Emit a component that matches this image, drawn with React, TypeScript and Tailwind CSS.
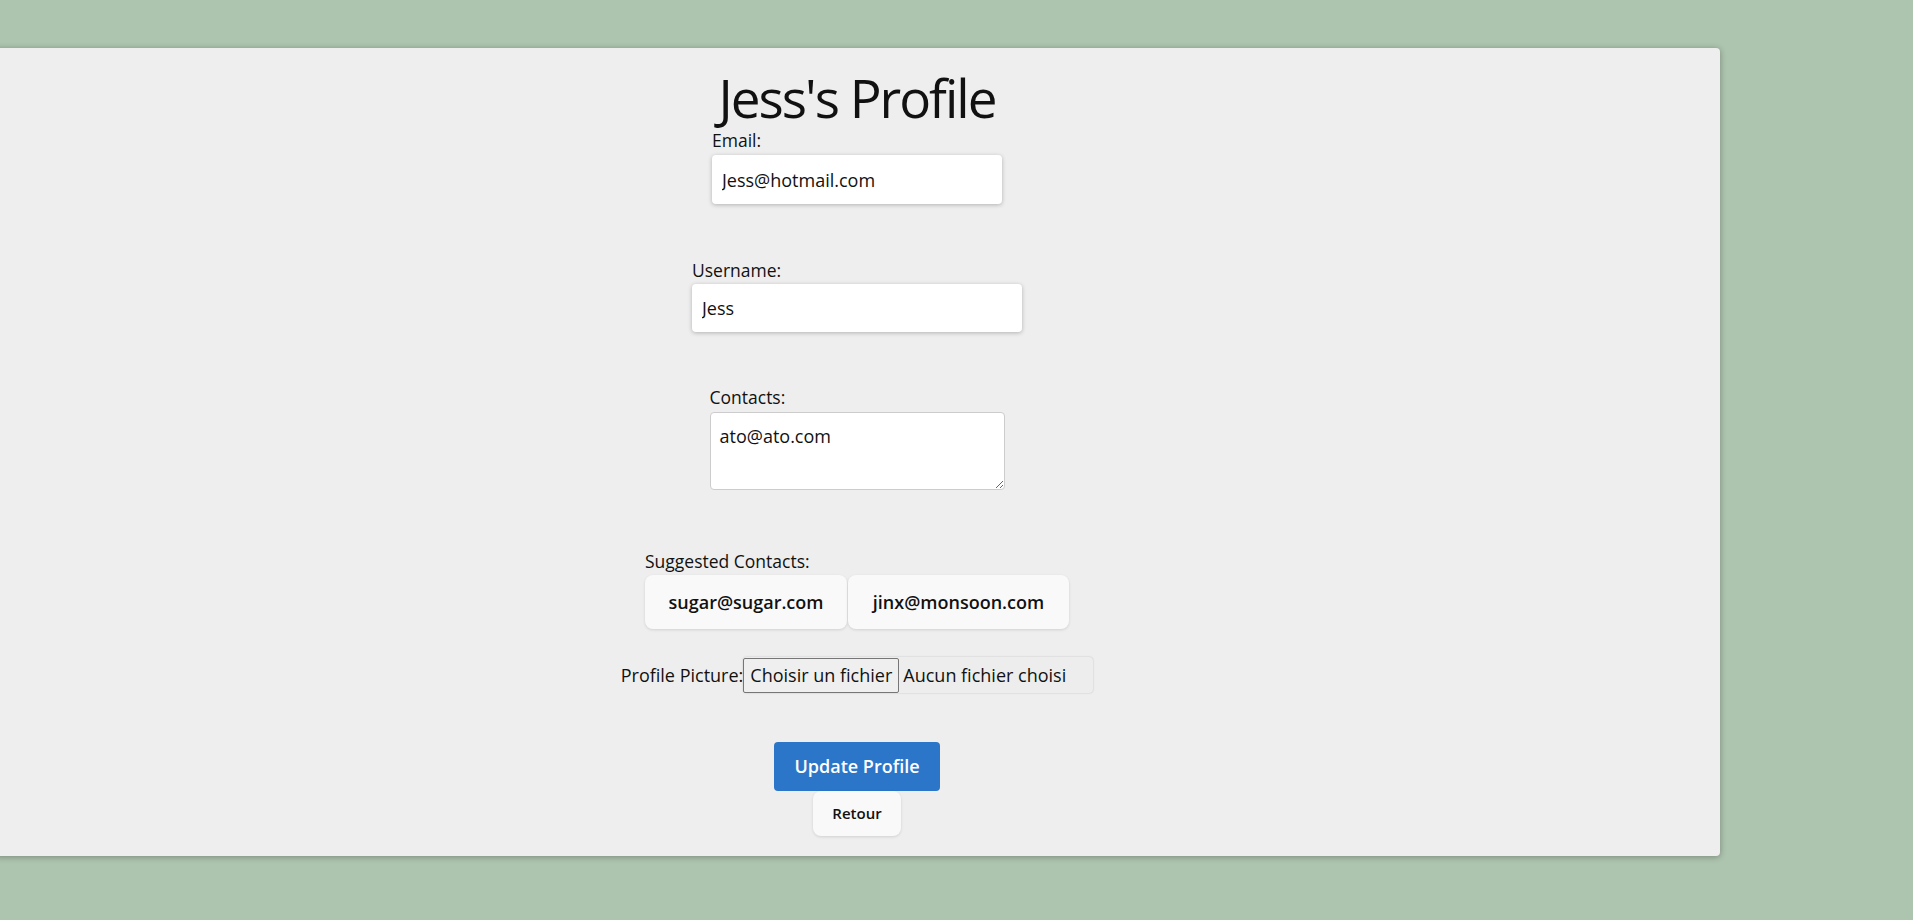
export default function App() {
  return (
    <div className="min-h-screen bg-[#adc4ae] pt-[48px] pb-[64px] overflow-hidden font-['Open_Sans',sans-serif] text-[#111]">
      <div className="-ml-[6px] w-[1726px] h-[808px] bg-[#eeeeee] rounded-[4px] shadow-[0_1px_6px_rgba(0,0,0,0.3)] pt-[25px] flex flex-col items-center">
        <h1 className="text-[53px] leading-[50px] font-normal tracking-[-2px] text-[#111]">Jess's Profile</h1>

        <div className="mt-[6px] flex flex-col items-start">
          <label className="text-[17.5px] leading-[22px]">Email:</label>
          <input
            defaultValue="Jess@hotmail.com"
            className="mt-[4px] w-[290px] h-[49px] bg-white rounded-[4px] px-[10px] text-[18px] shadow-[0_1px_4px_rgba(0,0,0,0.25)] outline-none"
          />
        </div>

        <div className="mt-[55px] flex flex-col items-start">
          <label className="text-[17.5px] leading-[22px]">Username:</label>
          <input
            defaultValue="Jess"
            className="mt-[3px] w-[330px] h-[48px] bg-white rounded-[4px] px-[10px] text-[18px] shadow-[0_1px_4px_rgba(0,0,0,0.25)] outline-none"
          />
        </div>

        <div className="mt-[54px] flex flex-col items-start">
          <label className="text-[17.5px] leading-[22px]">Contacts:</label>
          <textarea
            defaultValue="ato@ato.com"
            className="mt-[4px] w-[295px] h-[78px] bg-white rounded-[4px] border border-[#cccccc] px-[9px] pt-[11px] text-[18px] leading-[24px] outline-none resize-y"
          />
        </div>

        <div className="mt-[60px] flex flex-col items-start">
          <label className="text-[17.5px] leading-[22px]">Suggested Contacts:</label>
          <div className="mt-[3px] flex">
            <button className="w-[202px] h-[54px] bg-[#f9f9f9] rounded-[8px] text-[18px] font-semibold shadow-[0_1px_3px_rgba(0,0,0,0.12)]">
              sugar@sugar.com
            </button>
            <button className="ml-px w-[221px] h-[54px] bg-[#f9f9f9] rounded-[8px] text-[18px] font-semibold shadow-[0_1px_3px_rgba(0,0,0,0.12)]">
              jinx@monsoon.com
            </button>
          </div>
        </div>

        <div className="mt-[28px] flex items-center h-[36px]">
          <label className="text-[18px] leading-[22px]">Profile Picture:</label>
          <div className="flex items-center h-[36px] w-[350px] bg-[#ededed] rounded-[4px] shadow-[0_0_2px_rgba(0,0,0,0.2)]">
            <span className="h-[35px] w-[156px] flex items-center justify-center border border-[#767676] rounded-[2px] bg-[#efefef] text-[18px]">
              Choisir un fichier
            </span>
            <span className="ml-[4px] text-[18px]">Aucun fichier choisi</span>
          </div>
        </div>

        <button className="mt-[49px] w-[166px] h-[49px] bg-[#2b76c9] rounded-[4px] text-white text-[18px] font-semibold">
          Update Profile
        </button>
        <button className="w-[88px] h-[45px] bg-[#f9f9f9] rounded-[8px] text-[15px] font-semibold shadow-[0_1px_3px_rgba(0,0,0,0.12)]">
          Retour
        </button>
      </div>
    </div>
  )
}
